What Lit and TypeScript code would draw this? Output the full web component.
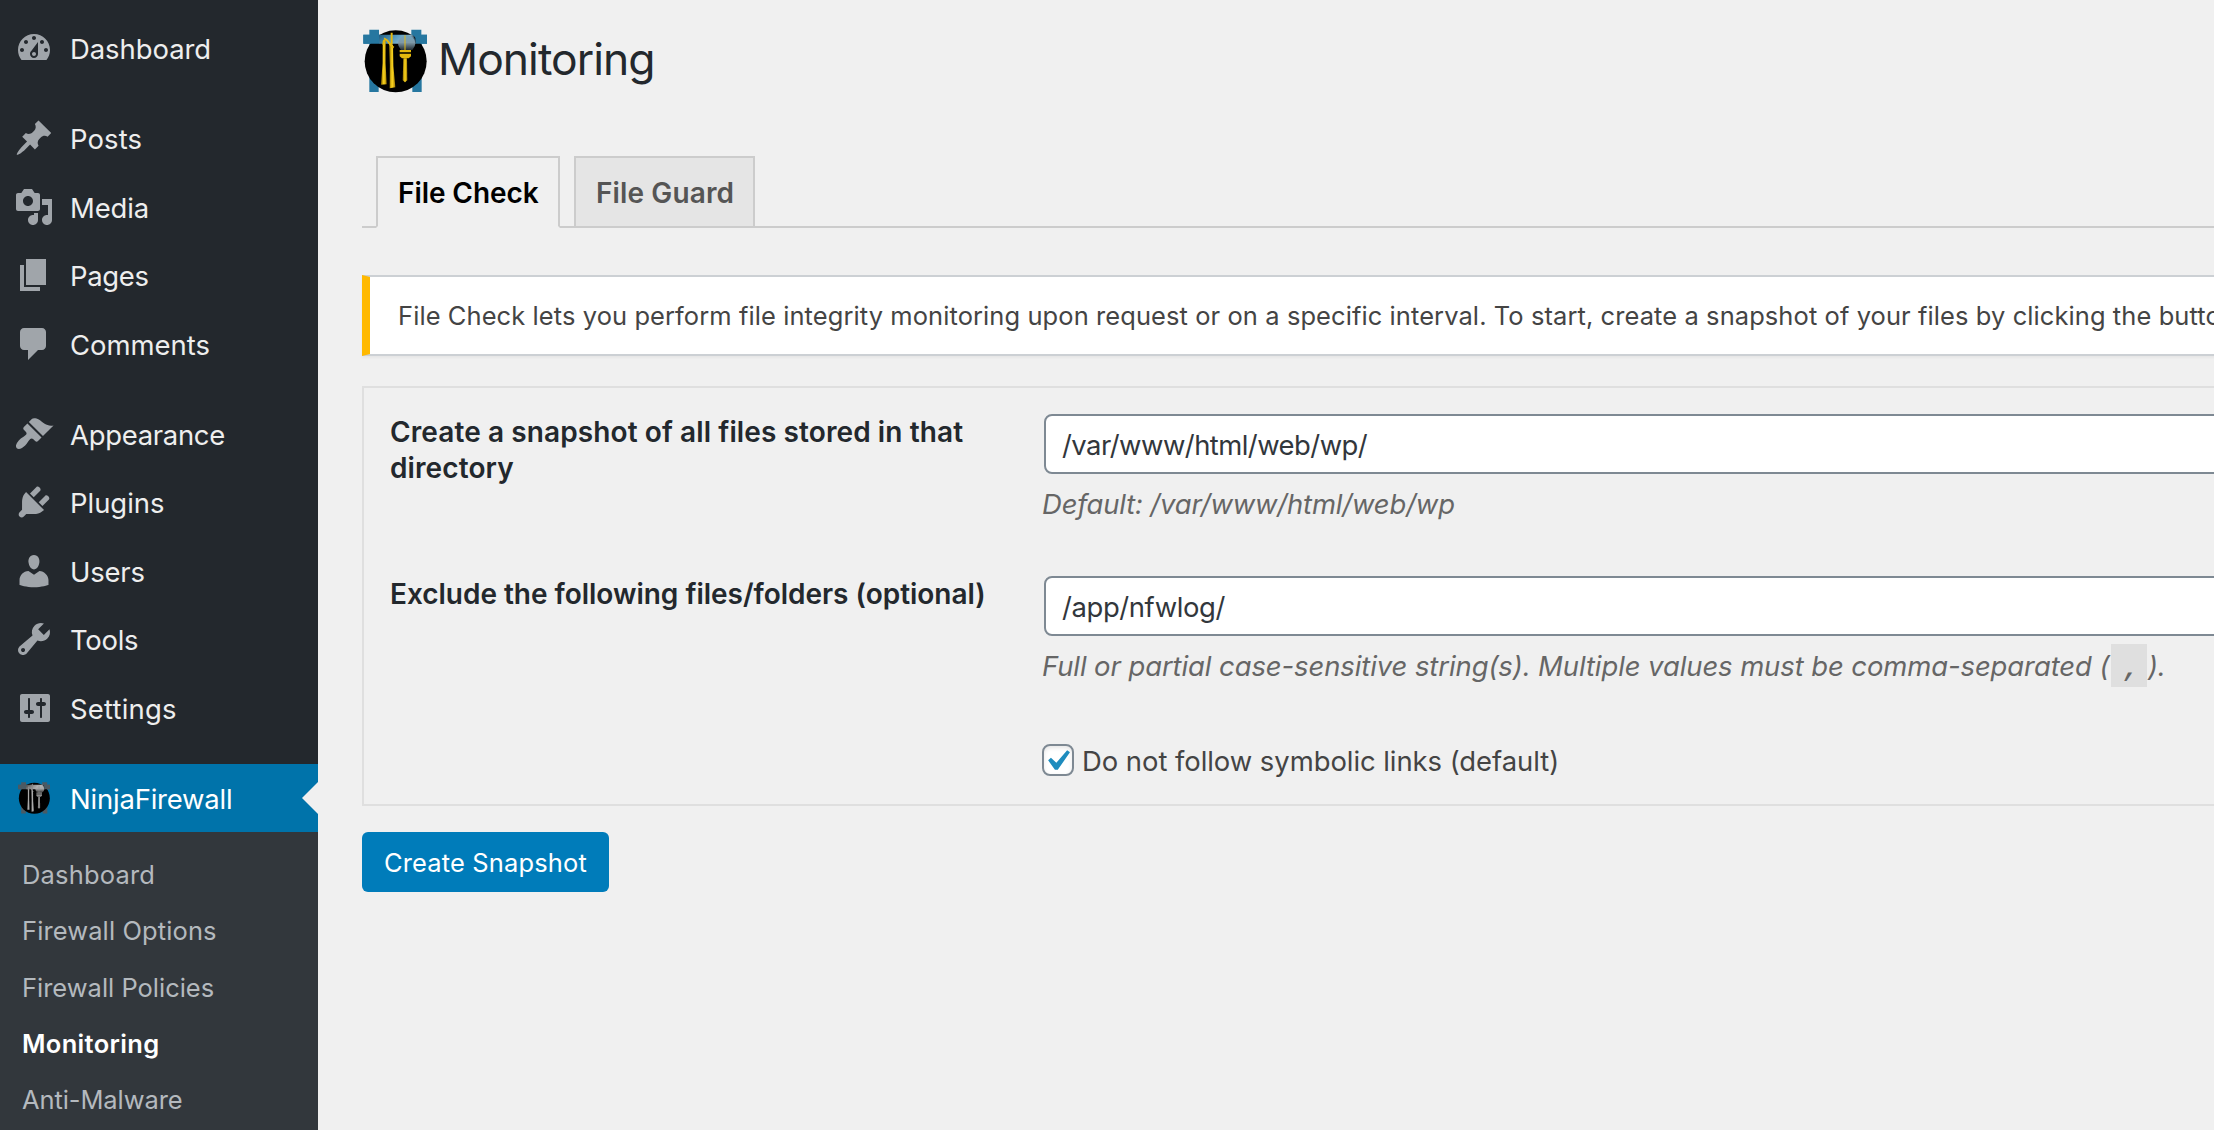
import { LitElement, html, css, svg } from "lit";
import { customElement, property } from "lit/decorators.js";
import { classMap } from "lit/directives/class-map.js";

const FONT = css`Inter, "Liberation Sans", sans-serif`;

interface MenuItem {
  label: string;
  icon: string;
  tracking: number;
  gapAfter?: boolean;
  current?: boolean;
}

const ICONS: Record<string, string> = {
  dashboard:
    "M3.76 16h12.48c1.1-1.37 1.76-3.11 1.76-5 0-4.42-3.58-8-8-8s-8 3.58-8 8c0 1.89.66 3.63 1.76 5zM10 4c.55 0 1 .45 1 1s-.45 1-1 1-1-.45-1-1 .45-1 1-1zM6 6c.55 0 1 .45 1 1s-.45 1-1 1-1-.45-1-1 .45-1 1-1zm8 0c.55 0 1 .45 1 1s-.45 1-1 1-1-.45-1-1 .45-1 1-1zm-5.37 5.55L12 7v6c0 1.1-.9 2-2 2s-2-.9-2-2c0-.57.24-1.08.63-1.45zM4 10c.55 0 1 .45 1 1s-.45 1-1 1-1-.45-1-1 .45-1 1-1zm12 0c.55 0 1 .45 1 1s-.45 1-1 1-1-.45-1-1 .45-1 1-1zm-5 3c0-.55-.45-1-1-1s-1 .45-1 1 .45 1 1 1 1-.45 1-1z",
  post: "M10.44 3.02l1.82-1.82 6.36 6.35-1.83 1.82c-1.05-.68-2.48-.57-3.41.36l-.75.75c-.92.93-1.04 2.35-.35 3.41l-1.83 1.82-2.41-2.41-2.8 2.79c-.42.42-3.38 2.71-3.8 2.29s1.86-3.39 2.28-3.81l2.79-2.79L4.1 9.36l1.83-1.82c1.05.69 2.48.57 3.4-.36l.75-.75c.93-.92 1.05-2.35.36-3.41z",
  media:
    "M13 11V4c0-.55-.45-1-1-1h-1.67L9 1H5L3.67 3H2c-.55 0-1 .45-1 1v7c0 .55.45 1 1 1h10c.55 0 1-.45 1-1zM7 4.5c1.38 0 2.5 1.12 2.5 2.5S8.38 9.5 7 9.5 4.5 8.38 4.5 7 5.62 4.5 7 4.5zM14 6h5v10.5c0 1.38-1.12 2.5-2.5 2.5S14 17.88 14 16.5s1.12-2.5 2.5-2.5c.17 0 .34.02.5.05V9h-3V6zm-4 8.05V13h2v3.5c0 1.38-1.12 2.5-2.5 2.5S7 17.88 7 16.5 8.12 14 9.5 14c.17 0 .34.02.5.05z",
  page: "M6 15V2h10v13H6zm-1 1h8v2H3V5h2v11z",
  comments:
    "M5 2h9c1.1 0 2 .9 2 2v7c0 1.1-.9 2-2 2h-2l-5 5v-5H5c-1.1 0-2-.9-2-2V4c0-1.1.9-2 2-2z",
  appearance:
    "M14.48 11.06L7.41 3.99l1.5-1.5c.5-.56 2.3-.47 3.51.32 1.21.8 1.43 1.28 2.91 2.1 1.18.64 2.45 1.26 4.45.85zm-.71.71L6.7 4.7 4.93 6.47c-.39.39-.39 1.02 0 1.41l1.06 1.06c.39.39.39 1.03 0 1.42-.6.6-1.43 1.11-2.21 1.69-.35.26-.7.53-1.01.84C1.43 14.23.4 16.08 1.4 17.07c.99 1 2.84-.03 4.18-1.36.31-.31.58-.66.85-1.02.57-.78 1.08-1.61 1.69-2.21.39-.39 1.02-.39 1.41 0l1.06 1.06c.39.39 1.02.39 1.41 0z",
  plugins:
    "M13.11 4.36L9.87 7.6 8 5.73l3.24-3.24c.35-.34 1.05-.2 1.56.32.52.51.66 1.21.31 1.55zm-8 1.77l.91-1.12 9.01 9.01-1.19.84c-.71.71-2.63 1.16-3.82 1.16H6.14L4.9 17.26c-.59.59-1.54.59-2.12 0-.59-.58-.59-1.53 0-2.12l1.24-1.24v-3.88c0-1.13.4-3.19 1.09-3.89zm7.26 3.97l3.24-3.24c.34-.35 1.04-.21 1.55.31.52.51.66 1.21.31 1.55l-3.24 3.25z",
  users:
    "M10 9.25c-2.27 0-2.73-3.44-2.73-3.44C7 4.02 7.82 2 9.97 2c2.16 0 2.98 2.02 2.71 3.81 0 0-.41 3.44-2.68 3.44zm0 2.57L12.72 10c2.39 0 4.52 2.33 4.52 4.53v2.49s-3.65 1.13-7.24 1.13c-3.65 0-7.24-1.13-7.24-1.13v-2.49c0-2.25 1.94-4.48 4.47-4.48z",
  tools:
    "M16.68 9.77c-1.34 1.34-3.3 1.67-4.95.99l-5.41 6.52c-.99.99-2.59.99-3.58 0s-.99-2.59 0-3.57l6.52-5.42c-.68-1.65-.35-3.61.99-4.95 1.28-1.28 3.12-1.62 4.72-1.06l-2.89 2.89 2.82 2.82 2.86-2.87c.53 1.58.18 3.39-1.08 4.65zM3.81 16.21c.4.39 1.04.39 1.43 0 .4-.4.4-1.04 0-1.43-.39-.4-1.03-.4-1.43 0-.39.39-.39 1.03 0 1.43z",
  settings:
    "M18 16V4c0-.55-.45-1-1-1H4c-.55 0-1 .45-1 1v12c0 .55.45 1 1 1h13c.55 0 1-.45 1-1zM8 11h1c.55 0 1 .45 1 1s-.45 1-1 1H8v1.5c0 .28-.22.5-.5.5s-.5-.22-.5-.5V13H6c-.55 0-1-.45-1-1s.45-1 1-1h1V5.5c0-.28.22-.5.5-.5s.5.22.5.5V11zm5-2h-1c-.55 0-1-.45-1-1s.45-1 1-1h1V5.5c0-.28.22-.5.5-.5s.5.22.5.5V7h1c.55 0 1 .45 1 1s-.45 1-1 1h-1v5.5c0 .28-.22.5-.5.5s-.5-.22-.5-.5V9z",
};

const MENU: MenuItem[] = [
  { label: "Dashboard", icon: "dashboard", tracking: -0.05, gapAfter: true },
  { label: "Posts", icon: "post", tracking: 0.12 },
  { label: "Media", icon: "media", tracking: -0.1 },
  { label: "Pages", icon: "page", tracking: -0.31 },
  { label: "Comments", icon: "comments", tracking: 0, gapAfter: true },
  { label: "Appearance", icon: "appearance", tracking: -0.29 },
  { label: "Plugins", icon: "plugins", tracking: -0.01 },
  { label: "Users", icon: "users", tracking: -0.18 },
  { label: "Tools", icon: "tools", tracking: -0.28 },
  { label: "Settings", icon: "settings", tracking: 0.2, gapAfter: true },
  { label: "NinjaFirewall", icon: "ninja", tracking: -0.19, current: true },
];

const SUBMENU = [
  { label: "Dashboard", tracking: 0.2 },
  { label: "Firewall Options", tracking: 0.12 },
  { label: "Firewall Policies", tracking: 0 },
  { label: "Monitoring", tracking: 0.34, current: true },
  { label: "Anti-Malware", tracking: -0.08 },
];

/* Round plugin emblem: blue gate behind a black disc with golden figures. */
@customElement("ninja-logo")
export class NinjaLogo extends LitElement {
  @property({ type: Boolean, reflect: true }) mono = false;

  static styles = css`
    :host {
      display: block;
      width: 64px;
      height: 64px;
    }
    :host([mono]) {
      width: 32px;
      height: 32px;
    }
    .mark {
      display: block;
      width: 100%;
      height: 100%;
      overflow: visible;
    }
  `;

  render() {
    const c = this.mono
      ? {
          gate: "#4b5a64",
          shine: ["#4a4a4a", "#9a9a9a", "#b4b4b4", "#666"],
          orb: ["#b8b8b8", "#a4a4a4", "#1c1c1c"],
          gold: ["#444", "#b0b0b0", "#4c4c4c"],
          line: "#8a8a8a",
        }
      : {
          gate: "#2677a0",
          shine: ["#1c5c80", "#5a9cc0", "#8db6cc", "#3c5260"],
          orb: ["#6fa3c0", "#7f99a8", "#101418"],
          gold: ["#8a6a00", "#ffd820", "#a07a00"],
          line: "#e3b810",
        };
    return html`<svg class="mark" viewBox="21 21 192 192">
      <defs>
        <linearGradient id="shine" x1="0" y1="0" x2="1" y2="0.25">
          <stop offset="0" stop-color=${c.shine[0]} />
          <stop offset="0.5" stop-color=${c.shine[1]} />
          <stop offset="0.8" stop-color=${c.shine[2]} />
          <stop offset="1" stop-color=${c.shine[3]} />
        </linearGradient>
        <linearGradient id="orb" x1="0" y1="0" x2="0" y2="1">
          <stop offset="0" stop-color=${c.orb[0]} />
          <stop offset="0.45" stop-color=${c.orb[1]} />
          <stop offset="1" stop-color=${c.orb[2]} />
        </linearGradient>
        <linearGradient id="gold" x1="0" y1="0" x2="1" y2="0">
          <stop offset="0" stop-color=${c.gold[0]} />
          <stop offset="0.5" stop-color=${c.gold[1]} />
          <stop offset="1" stop-color=${c.gold[2]} />
        </linearGradient>
        <filter id="soft" x="-5%" y="-5%" width="110%" height="110%">
          <feGaussianBlur stdDeviation=${this.mono ? 3 : 2} />
        </filter>
      </defs>
      <g filter="url(#soft)">
        <path
          fill=${c.gate}
          d="M40 23h29v15h97V23h30v15h17v27h-16v145h-28v-30H68v30H40V65H22V38h18z"
        />
        <circle cx="119" cy="118" r="93" fill="#000" />
        <path fill=${c.gate} d="M22 38h48v27H22zM178 38h35v27h-35z" />
        <path fill="url(#shine)" d="M69 38h100q11 12 10 27H69z" />
        <ellipse cx="152" cy="64" rx="26" ry="25" fill="url(#orb)" />
        <path fill="url(#gold)" d="M80 56l9-3q-2 70 3 134l-17 1q7-66 5-132z" />
        <path fill="url(#gold)" d="M99 62l12 6q-1 66 7 128l-17 3q2-70-2-137z" />
        <path
          d="M84 49q10 4 15 13t14 15M85 54l-3 14M107 32v34"
          fill="none"
          stroke=${c.line}
          stroke-width="6"
        />
        <path d="M147 40v46" stroke=${c.line} stroke-opacity="0.75" stroke-width="4" />
        <path fill=${c.line} d="M131 84h34v7h-34zM131 95h34v8l-7 6h-20l-7-6z" />
        <path fill="url(#gold)" d="M142 109h11l1 66-7 6-7-6z" />
      </g>
    </svg>`;
  }
}

@customElement("admin-menu")
export class AdminMenu extends LitElement {
  static styles = css`
    :host {
      display: flex;
      flex-direction: column;
      width: 318px;
      height: 1130px;
      box-sizing: border-box;
      padding-top: 14px;
      overflow: hidden;
      background: #23282d;
      font-family: ${FONT};
    }
    .item {
      display: flex;
      flex: none;
      box-sizing: border-box;
      height: 68.4px;
      padding-left: 14px;
      color: #eee;
      font-size: 27.44px;
      line-height: 70px;
      white-space: nowrap;
    }
    .item.gap {
      margin-bottom: 22px;
    }
    .item.current {
      position: relative;
      height: 68px;
      background: #0073aa;
      color: #fff;
    }
    .item.current::after {
      content: "";
      position: absolute;
      right: 0;
      top: 18px;
      border: 16px solid transparent;
      border-left-width: 0;
      border-right-color: #f0f0f0;
    }
    .icon {
      flex: none;
      width: 40px;
      height: 40px;
      margin: 14px 15px 0 0;
      fill: #a0a5aa;
    }
    .emblem {
      margin: 18px 19px 0 4px;
    }
    .label {
      padding-left: 1px;
    }
    .sub {
      flex: 1;
      padding: 15px 0 0 22px;
      background: #32373c;
      color: #b4b9be;
      font-size: 25.48px;
      line-height: 56.3px;
      white-space: nowrap;
    }
    .sub .on {
      color: #fff;
      font-weight: 600;
    }
  `;

  private item(m: MenuItem) {
    return html`<div class=${classMap({ item: true, gap: !!m.gapAfter, current: !!m.current })}>
      ${m.icon === "ninja"
        ? html`<ninja-logo class="emblem" mono></ninja-logo>`
        : html`<svg class="icon" viewBox="0 0 20 20">
            ${svg`<path fill-rule="evenodd" d=${ICONS[m.icon]} />`}
          </svg>`}
      <span class="label" style="letter-spacing:${m.tracking}px">${m.label}</span>
    </div>`;
  }

  render() {
    return html`${MENU.map((m) => this.item(m))}
      <div class="sub">
        ${SUBMENU.map(
          (s) => html`<div class=${classMap({ on: !!s.current })} style="letter-spacing:${s.tracking}px">${s.label}</div>`,
        )}
      </div>`;
  }
}

@customElement("app-root")
export class AppRoot extends LitElement {
  static styles = css`
    :host {
      display: grid;
      grid-template-columns: 318px minmax(0, 1fr);
      height: 1130px;
      overflow: hidden;
      background: #f0f0f0;
      color: #444;
      font-family: ${FONT};
    }
    .main {
      box-sizing: border-box;
      padding: 29px 0 0 44px;
      overflow: hidden;
    }
    .head {
      display: flex;
      gap: 11px;
      height: 64px;
      padding-left: 1px;
    }
    .title {
      margin: 0;
      color: #23282d;
      font-size: 44.4px;
      font-weight: 400;
      line-height: 60px;
      letter-spacing: -0.95px;
    }
    .tabs {
      display: flex;
      gap: 14px;
      height: 70px;
      margin-top: 63px;
      padding-left: 14px;
      border-bottom: 2px solid #ccc;
    }
    .tab {
      box-sizing: border-box;
      width: 181px;
      height: 70px;
      padding-left: 20px;
      border: 2px solid #ccc;
      border-bottom: 0;
      background: #e5e5e5;
      color: #555;
      font-size: 28px;
      font-weight: 600;
      line-height: 70px;
      letter-spacing: 0.12px;
      white-space: nowrap;
    }
    .tab.active {
      width: 184px;
      height: 72px;
      border-bottom: 2px solid #f0f0f0;
      background: #f0f0f0;
      color: #000;
      letter-spacing: -0.08px;
    }
    .notice {
      box-sizing: border-box;
      height: 81px;
      margin: 47px -40px 0 0;
      padding-left: 28px;
      border: 2px solid #ccd0d4;
      border-left: 8px solid #ffb900;
      background: #fff;
      box-shadow: 0 2px 2px rgba(0, 0, 0, 0.04);
      font-size: 25.48px;
      line-height: 77px;
      letter-spacing: 0.09px;
      white-space: nowrap;
    }
    .panel {
      display: grid;
      grid-template-columns: 620px minmax(0, 1fr);
      grid-template-rows: 162px auto;
      column-gap: 32px;
      align-items: start;
      box-sizing: border-box;
      height: 420px;
      margin: 30px -40px 0 0;
      padding: 26px 0 0 26px;
      border: 2px solid #dfdfdf;
    }
    .label {
      color: #23282d;
      font-size: 28px;
      font-weight: 600;
      line-height: 36.4px;
      letter-spacing: 0.1px;
    }
    .label.tight {
      letter-spacing: -0.025px;
    }
    .input {
      display: block;
      box-sizing: border-box;
      width: calc(100% - 2px);
      height: 60px;
      margin: 0 0 0 2px;
      padding: 2px 16px 0;
      border: 2px solid #7e8993;
      border-radius: 8px;
      outline: none;
      background: #fff;
      color: #32373c;
      font-family: inherit;
      font-size: 27.44px;
      letter-spacing: -0.55px;
    }
    .input.short {
      letter-spacing: -0.4px;
    }
    .hint {
      margin-top: 9px;
      color: #666;
      font-size: 27.44px;
      font-style: italic;
      line-height: 42px;
      letter-spacing: -0.08px;
      white-space: nowrap;
    }
    .hint.path {
      letter-spacing: -0.16px;
    }
    .code {
      margin: 0 1px 0 2px;
      padding: 10px 8px 3px 12px;
      background: rgba(0, 0, 0, 0.07);
      font-family: "Liberation Mono", monospace;
      font-size: 26px;
      font-weight: 700;
      line-height: 0;
      letter-spacing: 0;
    }
    .check {
      display: flex;
      gap: 8px;
      height: 32px;
      margin-top: 57px;
      font-size: 27.44px;
      line-height: 34px;
      letter-spacing: -0.05px;
      white-space: nowrap;
    }
    .box {
      box-sizing: border-box;
      width: 32px;
      height: 32px;
      border: 2px solid #7e8993;
      border-radius: 8px;
      background: #fff;
      box-shadow: inset 0 2px 4px rgba(0, 0, 0, 0.1);
    }
    .tick {
      display: block;
      width: 42px;
      height: 42px;
      margin: -6px 0 0 -8px;
      fill: #1e8cbe;
    }
    .button {
      display: block;
      width: 247px;
      height: 60px;
      margin-top: 26px;
      padding: 1px 0 0 22px;
      border: 0;
      border-radius: 6px;
      background: #007cba;
      color: #fff;
      font-family: inherit;
      font-size: 25.48px;
      line-height: 59px;
      letter-spacing: 0.156px;
      text-align: left;
    }
  `;

  render() {
    return html`
      <admin-menu></admin-menu>
      <main class="main">
        <div class="head">
          <ninja-logo></ninja-logo>
          <h1 class="title">Monitoring</h1>
        </div>
        <nav class="tabs">
          <div class="tab active">File Check</div>
          <div class="tab">File Guard</div>
        </nav>
        <div class="notice">File Check lets you perform file integrity monitoring upon request or on a specific interval. To start, create a snapshot of your files by clicking the button below.</div>
        <section class="panel">
          <div class="label">Create a snapshot of all files stored in that directory</div>
          <div>
            <input class="input" type="text" .value=${"/var/www/html/web/wp/"} />
            <div class="hint path">Default: /var/www/html/web/wp</div>
          </div>
          <div class="label tight">Exclude the following files/folders (optional)</div>
          <div>
            <input class="input short" type="text" .value=${"/app/nfwlog/"} />
            <div class="hint">Full or partial case-sensitive string(s). Multiple values must be comma-separated (<code class="code">,</code>).</div>
            <div class="check">
              <span class="box"><svg class="tick" viewBox="0 0 20 20"><path d="M14.83 4.89l1.34.94-5.81 8.38H9.02L5.78 9.67l1.34-1.25 2.57 2.4z" /></svg></span>
              <span>Do not follow symbolic links (default)</span>
            </div>
          </div>
        </section>
        <button class="button">Create Snapshot</button>
      </main>
    `;
  }
}
